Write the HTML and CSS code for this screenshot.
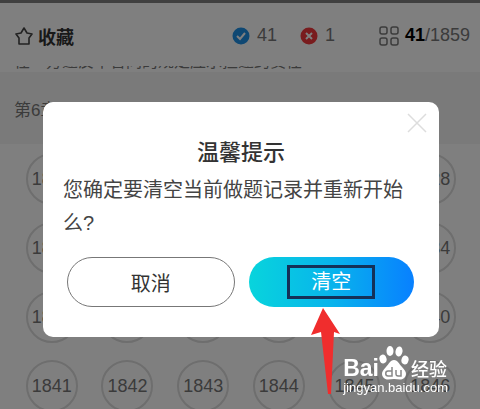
FILE: index.html
```
<!DOCTYPE html>
<html lang="zh-CN">
<head>
    <meta charset="UTF-8">
    <meta name="viewport" content="width=device-width, initial-scale=1.0">
    <title>温馨提示</title>
    <link rel="stylesheet" href="styles.css">
</head>
<body>

    <header class="toolbar">
        <button class="favorite" type="button">
            <svg width="20" height="20" viewBox="0 0 20 20" fill="none" stroke="#444" stroke-width="1.6" stroke-linejoin="round"><path d="M10 2l3 5 5 1-3 4v6H5v-6L2 8l5-1z"/></svg>
            收藏
        </button>
        <div class="count right">
            <svg width="18" height="18" viewBox="0 0 18 18"><circle cx="9" cy="9" r="8.5" fill="#1e90e6"/><path d="M5 9l3 3 5-6" fill="none" stroke="#fff" stroke-width="2"/></svg>
            41
        </div>
        <div class="count wrong">
            <svg width="18" height="18" viewBox="0 0 18 18"><circle cx="9" cy="9" r="8.5" fill="#f2383c"/><path d="M6 6l6 6M12 6l-6 6" stroke="#fff" stroke-width="2"/></svg>
            1
        </div>
        <div class="progress">
            <svg width="20" height="20" viewBox="0 0 20 20" fill="none" stroke="#777" stroke-width="1.5"><rect x="1" y="1" width="7" height="7" rx="2"/><rect x="12" y="1" width="7" height="7" rx="2"/><rect x="1" y="12" width="7" height="7" rx="2"/><rect x="12" y="12" width="7" height="7" rx="2"/></svg>
            <span><b>41</b>/1859</span>
        </div>
    </header>

    <main>
        <div class="question">任一方违反本合同的规定应承担违约责任</div>
        <h2 class="section">第6章</h2>
        <div class="numbers">
            <span>1823</span><span>1824</span><span>1825</span><span>1826</span><span>1827</span><span>1828</span>
            <span>1829</span><span>1830</span><span>1831</span><span>1832</span><span>1833</span><span>1834</span>
            <span>1835</span><span>1836</span><span>1837</span><span>1838</span><span>1839</span><span>1840</span>
            <span>1841</span><span>1842</span><span>1843</span><span>1844</span><span>1845</span><span>1846</span>
        </div>
    </main>

    <div class="overlay">
        <div class="dialog" role="dialog" aria-labelledby="dialog-title">
            <button class="close" type="button" aria-label="关闭">
                <svg width="20" height="20" viewBox="0 0 20 20" stroke="#ddd" stroke-width="1.5"><path d="M1 1l18 18M19 1L1 19"/></svg>
            </button>
            <h1 id="dialog-title">温馨提示</h1>
            <p>您确定要清空当前做题记录并重新开始么?</p>
            <div class="actions">
                <button class="cancel" type="button">取消</button>
                <button class="clear" type="button"><span>清空</span></button>
            </div>
            <svg class="arrow" width="30" height="88" viewBox="0 0 30 88"><path d="M12 0L29 26l-6-2-3 62h-3L10 24 0 27z" fill="#f02d2d"/></svg>
        </div>
    </div>

    <div class="watermark">
        <div class="brand">
            <span class="latin">Bai</span>
            <svg width="30" height="34" viewBox="0 0 30 34" fill="#fff">
                <ellipse cx="4" cy="13" rx="3.5" ry="4.5" transform="rotate(-15 4 13)"/>
                <ellipse cx="11" cy="5" rx="3.5" ry="5"/>
                <ellipse cx="20" cy="5.5" rx="3.5" ry="5" transform="rotate(10 20 5.5)"/>
                <ellipse cx="26" cy="14" rx="3.5" ry="4.5" transform="rotate(15 26 14)"/>
                <path d="M15 14c4 0 5 4 8 7 4 4 5 7 3 10-3 4-7 2-11 2s-8 2-11-2c-2-3-1-6 3-10 3-3 4-7 8-7z"/>
                <path d="M13 21v9H9c-3 0-3-5 0-5h4M17 24v4c0 2 1 2 5 2v-6" fill="none" stroke="#888" stroke-width="1.5"/>
            </svg>
            <span class="name">经验</span>
        </div>
        <div class="site">jingyan.baidu.com</div>
    </div>

</body>
</html>
```

FILE: styles.css
```
* {
    box-sizing: border-box;
}

body {
    font-family: "Liberation Sans", "Noto Sans CJK SC", sans-serif;
    background-color: #ffffff;
    color: #333;
    height: 100vh;
    margin: 0;
    overflow: hidden;
}

button {
    font-family: inherit;
    cursor: pointer;
    padding: 0;
    border: none;
    background: none;
}

svg {
    display: block;
    flex: none;
}

.toolbar {
    display: flex;
    align-items: center;
    height: 66px;
    padding: 2px 10px 0 14px;
    border-top: 3px solid #808080;
    font-size: 18px;
    color: #777;
}

.favorite {
    display: flex;
    align-items: center;
    gap: 4px;
    margin-right: auto;
    font-size: 18px;
    font-weight: bold;
    color: #333;
}

.count {
    display: flex;
    align-items: center;
    gap: 7px;
}

.right {
    margin-right: 23px;
}

.wrong {
    margin-right: 44px;
}

.progress {
    display: flex;
    align-items: center;
    gap: 6px;
}

.progress b {
    color: #000;
}

/* 题目滚动到工具栏下方，只露出底部 */
.question {
    display: flex;
    align-items: flex-end;
    height: 6px;
    padding-left: 14px;
    overflow: hidden;
    font-size: 16px;
    line-height: 20px;
    white-space: nowrap;
    color: #777;
}

.section {
    margin: 0;
    padding: 26px 14px 20px;
    background-color: #f4f4f4;
    font-size: 17px;
    font-weight: normal;
    line-height: 26px;
    color: #777;
}

.numbers {
    display: grid;
    grid-template-columns: repeat(6, 1fr);
    justify-items: center;
    row-gap: 17px;
    padding: 9px 12px 0 14px;
}

.numbers span {
    width: 52px;
    height: 52px;
    border: 2px solid #dcdcdc;
    border-radius: 50%;
    font-size: 18px;
    line-height: 48px;
    text-align: center;
    color: #777;
}

.overlay {
    position: fixed;
    inset: 0;
    padding: 102px 41px 0 43px;
    background-color: rgba(0, 0, 0, 0.5);
}

.dialog {
    position: relative;
    padding: 36px 20px 30px;
    border-radius: 10px;
    background-color: #fff;
}

.close {
    position: absolute;
    top: 11px;
    right: 12px;
}

.dialog h1 {
    margin: 0;
    font-size: 22px;
    font-weight: 500;
    line-height: 30px;
    text-align: center;
    color: #333;
}

.dialog p {
    margin: 6px 0 17px;
    font-size: 20px;
    line-height: 33px;
    color: #444;
}

.actions {
    display: flex;
    gap: 14px;
    padding: 0 5px 0 4px;
}

.actions button {
    flex: 1;
    height: 50px;
    border-radius: 25px;
    font-size: 20px;
}

.actions .cancel {
    border: 1px solid #777;
    color: #333;
}

.actions .clear {
    display: flex;
    align-items: center;
    justify-content: center;
    background: linear-gradient(to right, #08d4dc, #08b4ec 50%, #0880ff);
    color: #fff;
}

.clear span {
    padding: 0 21px;
    border: 3px solid #143058;
    line-height: 28px;
}

.arrow {
    position: absolute;
    top: 206px;
    right: 98px;
}

.watermark {
    position: absolute;
    right: 32px;
    bottom: 13px;
    color: #fff;
}

.brand {
    display: flex;
    align-items: flex-end;
    height: 34px;
}

.latin {
    font-size: 23px;
    font-weight: bold;
    line-height: 24px;
}

.name {
    padding-left: 2px;
    font-size: 18px;
    font-weight: 500;
    line-height: 20px;
}

.site {
    font-size: 13px;
    line-height: 16px;
}
```
